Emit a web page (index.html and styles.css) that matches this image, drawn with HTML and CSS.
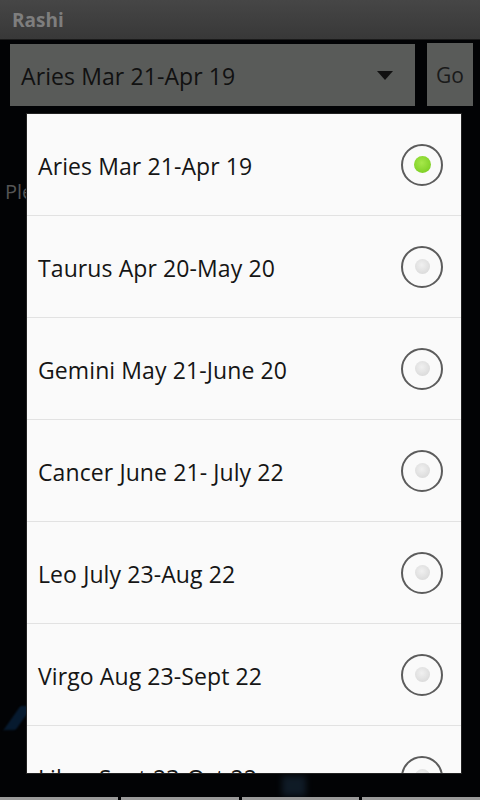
FILE: index.html
```html
<!DOCTYPE html>
<html>
<head>
	<meta charset="UTF-8">
	<title>Rashi</title>
<link rel="stylesheet" href="styles.css">
</head>
<body>
<div id="titlebar">Rashi</div>
<div id="toolbar">
	<div id="spinner"><span>Aries Mar 21-Apr 19</span><i class="caret"></i></div>
	<div id="go">Go</div>
</div>
<p id="hint">Please select your sign</p>
<div id="splash1"></div>
<div id="splash2"></div>
<div id="bottombar"><span></span><span></span><span></span><span></span></div>

<div id="dialog">
	<ul id="choices">
		<li class="checked">Aries Mar 21-Apr 19<b></b></li>
		<li>Taurus Apr 20-May 20<b></b></li>
		<li>Gemini May 21-June 20<b></b></li>
		<li>Cancer June 21- July 22<b></b></li>
		<li>Leo July 23-Aug 22<b></b></li>
		<li>Virgo Aug 23-Sept 22<b></b></li>
		<li>Libra Sept 23-Oct 22<b></b></li>
	</ul>
</div>
</body>
</html>
```

FILE: styles.css
```css
html,body{margin:0;padding:0;}
body{width:480px;height:800px;background:#020305;font-family:"Open Sans","DejaVu Sans",sans-serif;position:relative;overflow:hidden;}
#titlebar{height:39px;line-height:40px;padding-left:12px;background:linear-gradient(#464646,#383838);border-bottom:1px solid #1a1a1a;color:#7e7e7e;font-weight:bold;font-size:19px;}
#toolbar{display:flex;padding:4px 7px 0 10px;gap:12px;height:62px;}
#spinner{flex:1;display:flex;align-items:center;padding:1px 22px 0 11px;background:#595b59;color:#111;font-size:23px;letter-spacing:.1px;}
#spinner span{flex:1;}
.caret{width:0;height:0;border-left:8px solid transparent;border-right:8px solid transparent;border-top:9px solid #111;}
#go{width:46px;display:flex;align-items:center;justify-content:center;background:#595b59;color:#1a1a1a;font-size:21px;margin-top:-1px;}
#hint{margin:72px 0 0 5px;color:#555;font-size:20px;}
#splash1{position:absolute;left:12px;top:706px;width:12px;height:24px;background:#0a2a4c;transform:skewX(-35deg);opacity:.6;filter:blur(1px);}
#splash2{position:absolute;left:282px;top:776px;width:24px;height:20px;background:#1d3348;opacity:.5;filter:blur(3px);}
#bottombar{position:absolute;left:0;right:0;bottom:0;height:3px;display:flex;gap:3px;}
#bottombar span{flex:1;background:#9a9a9a;}

#dialog{position:absolute;left:27px;top:114px;width:434px;height:659px;background:#fafafa;overflow:hidden;box-shadow:0 0 0 1px #222;}
#choices{list-style:none;margin:0;padding:0;}
#choices li{box-sizing:border-box;height:102px;border-bottom:1px solid #e2e2e2;display:flex;align-items:center;justify-content:space-between;padding:3px 18px 0 11px;color:#151515;font-size:23px;letter-spacing:.1px;}
#choices b{width:38px;height:38px;border:2px solid #5c5c5c;border-radius:50%;display:flex;align-items:center;justify-content:center;margin-top:-3px;}
#choices b::after{content:"";width:15px;height:15px;border-radius:50%;background:radial-gradient(circle at 45% 40%,#f0f0f0,#d4d4d4);}
#choices li.checked b::after{width:17px;height:17px;background:radial-gradient(circle at 45% 40%,#a6e84a,#72c81a);}
```
